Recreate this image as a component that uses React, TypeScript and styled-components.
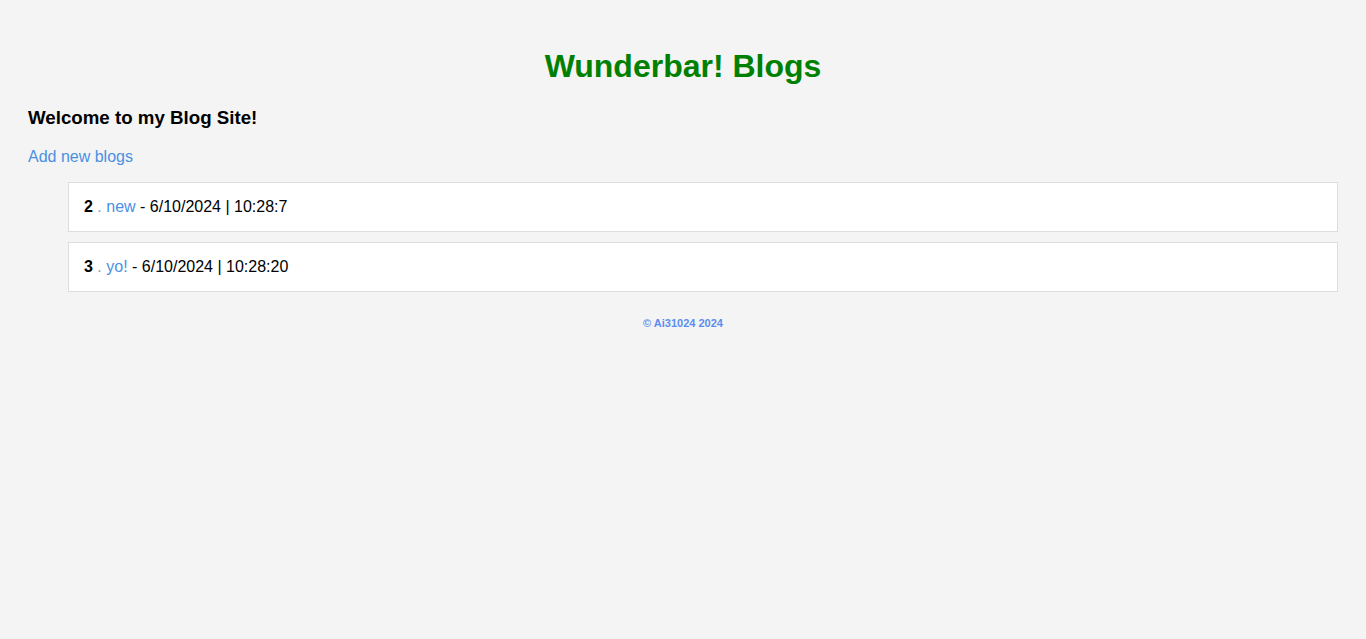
import React from 'react';
import styled, { createGlobalStyle } from 'styled-components';

const GlobalStyle = createGlobalStyle`
    html, body {
        margin: 0;
        background-color: #f4f4f4;
    }
    body {
        font-family: "Liberation Sans", Arial, sans-serif;
        color: #000;
    }
`;

interface Blog {
    id: number;
    title: string;
    date: string;
    time: string;
}

const blogs: Blog[] = [
    { id: 2, title: 'new', date: '6/10/2024', time: '10:28:7' },
    { id: 3, title: 'yo!', date: '6/10/2024', time: '10:28:20' },
];

export default function App() {
    return (
        <>
            <GlobalStyle />
            <PageWrapper>
                <Title>Wunderbar! Blogs</Title>
                <Welcome>Welcome to my Blog Site!</Welcome>
                <AddLinkRow>
                    <BlueLink href="#">Add new blogs</BlueLink>
                </AddLinkRow>

                <BlogList>
                    {blogs.map((blog) => (
                        <BlogItem key={blog.id}>
                            <strong>{blog.id}</strong>
                            <span className="txt__dot"> . </span>
                            <BlueLink href="#">{blog.title}</BlueLink>
                            {` - ${blog.date} | ${blog.time}`}
                        </BlogItem>
                    ))}
                </BlogList>

                <Footer>© Ai31024 2024</Footer>
            </PageWrapper>
        </>
    );
}

const PageWrapper = styled.div`
    padding: 27px 28px 20px;
`;

const Title = styled.h1`
    margin: 21.44px 0;
    font-size: 32px;
    font-weight: bold;
    text-align: center;
    color: #008000;
`;

const Welcome = styled.h3`
    margin: 18.72px 0;
    font-size: 18.72px;
    font-weight: bold;
`;

const AddLinkRow = styled.p`
    margin: 16px 0;
    font-size: 16px;
`;

const BlueLink = styled.a`
    color: #4a90e2;
    text-decoration: none;
`;

const BlogList = styled.ul`
    list-style: none;
    margin: 16px 0;
    padding-left: 40px;
`;

const BlogItem = styled.li`
    background-color: #fff;
    border: 1px solid #ddd;
    padding: 15px;
    margin-bottom: 10px;
    font-size: 16px;

    .txt__dot {
        color: #7a9cc6;
    }
`;

const Footer = styled.footer`
    margin-top: 25px;
    text-align: center;
    font-size: 11px;
    font-weight: bold;
    color: #5b8def;
`;
